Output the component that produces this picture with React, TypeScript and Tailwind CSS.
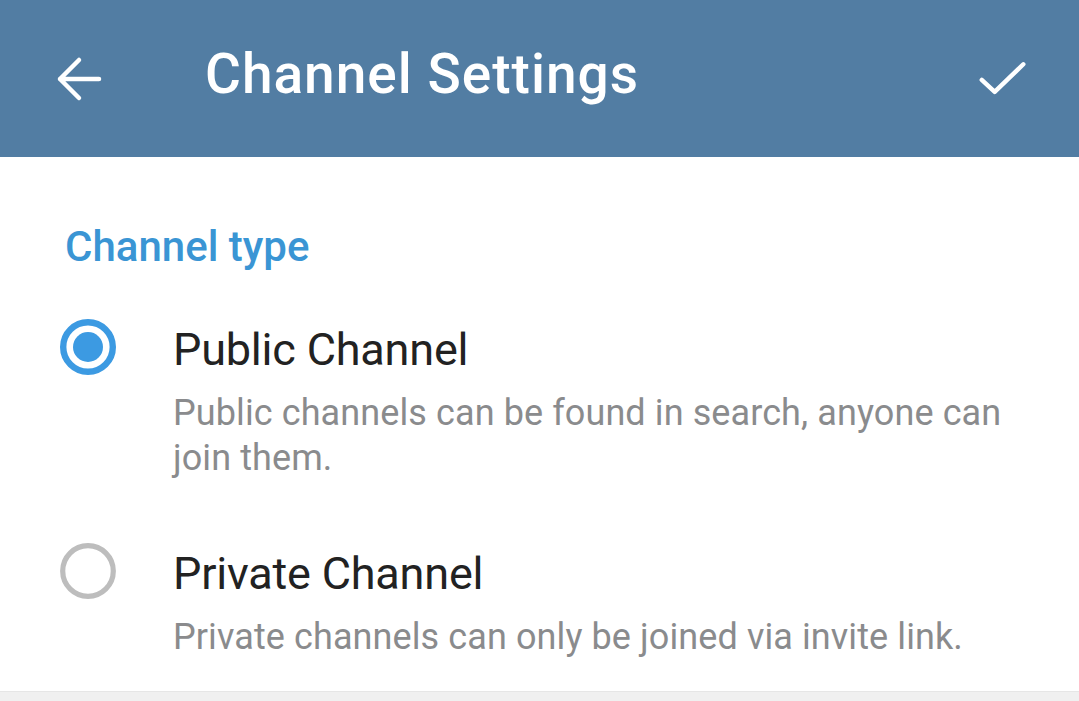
import { useState } from 'react'

const Radio = ({ checked }: { checked: boolean }) => (
  <svg width="58" height="58" viewBox="0 0 58 58" className="shrink-0">
    <circle
      cx="29"
      cy="29"
      r={checked ? 24.8 : 25.3}
      fill="none"
      stroke={checked ? '#3c9ae2' : '#bdbdbd'}
      strokeWidth={checked ? 6.4 : 5.2}
    />
    {checked ? <circle cx="29" cy="29" r="15" fill="#3c9ae2" /> : null}
  </svg>
)

const options = [
  {
    id: 'public',
    title: 'Public Channel',
    text: 'Public channels can be found in search, anyone can join them.',
  },
  {
    id: 'private',
    title: 'Private Channel',
    text: 'Private channels can only be joined via invite link.',
  },
]

export default function App() {
  const [type, setType] = useState('public')

  return (
    <div className="h-[701px] w-[1079px] overflow-hidden bg-[#f0f0f0] font-['Roboto',sans-serif]">
      <header className="flex h-[157px] items-center bg-[#527da3] text-white">
        <button type="button" className="ml-[55px] flex h-12 w-12 items-center justify-center">
          <svg width="48" height="48" viewBox="0 0 48 48" fill="none">
            <path
              d="M44 24H5M24 5L5 24L24 43"
              stroke="white"
              strokeWidth="4.5"
              strokeLinecap="round"
              strokeLinejoin="round"
            />
          </svg>
        </button>
        <h1 className="ml-[102px] pb-[9px] text-[55px] font-medium leading-[66px] tracking-[1px]">
          Channel Settings
        </h1>
        <button type="button" className="ml-auto mr-[52px] flex h-12 w-12 items-center justify-center">
          <svg width="52" height="40" viewBox="0 0 52 40" fill="none">
            <path
              d="M3 21L17 34L48 4"
              stroke="white"
              strokeWidth="4.8"
              strokeLinecap="round"
              strokeLinejoin="round"
            />
          </svg>
        </button>
      </header>

      <section className="border-b border-[#e6e6e6] bg-white pb-[31px]">
        <h2 className="px-[65px] pt-[65px] text-[42px] font-medium leading-[50px] text-[#3a95d4]">Channel type</h2>
        <div className="mt-[51px] flex flex-col gap-[66px]">
          {options.map((option) => (
            <button
              type="button"
              key={option.id}
              onClick={() => setType(option.id)}
              className="flex items-start text-left"
            >
              <div className="ml-[59px] mt-[-5px]">
                <Radio checked={type === option.id} />
              </div>
              <div className="ml-[56px] pr-[60px]">
                <div className="text-[45px] leading-[54px] tracking-[-0.2px] text-[#222222]">{option.title}</div>
                <div className="mt-[14px] text-[36px] leading-[45px] tracking-[0.1px] text-[#8a8b8d]">
                  {option.text}
                </div>
              </div>
            </button>
          ))}
        </div>
      </section>
    </div>
  )
}
